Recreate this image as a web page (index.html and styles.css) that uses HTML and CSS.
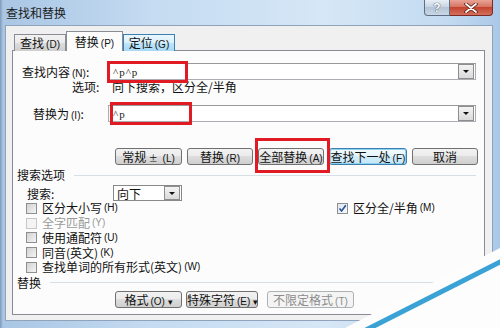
FILE: index.html
```html
<!DOCTYPE html>
<html lang="zh-CN">
<head>
  <meta charset="UTF-8" />
  <title>查找和替换</title>
  <link rel="stylesheet" href="styles.css">
</head>
<body>
  <div class="window">
    <div class="titlebar">
      <span class="title">查找和替换</span>
      <div class="controls">
        <div class="ctl help">?</div>
        <div class="ctl close">
          <svg width="14" height="10" viewBox="0 0 14 10">
            <path d="M2 1 L12 9 M12 1 L2 9" stroke="#5a1a14" stroke-width="3.4" stroke-linecap="round" />
            <path d="M2 1 L12 9 M12 1 L2 9" stroke="#fff" stroke-width="1.8" stroke-linecap="round" />
          </svg>
        </div>
      </div>
    </div>

    <div class="client">
      <div class="tabs">
        <div class="tab">查找<span class="key">(<u>D</u>)</span></div>
        <div class="tab active">替换<span class="key">(<u>P</u>)</span></div>
        <div class="tab hover">定位<span class="key">(<u>G</u>)</span></div>
      </div>

      <div class="panel">
        <!-- find / replace fields -->
        <div class="field-row">
          <span class="field-label">查找内容<span class="key">(<u>N</u>)</span>:</span>
          <div class="combo"><span class="combo-text">^p^p</span><span class="drop"></span></div>
        </div>
        <div class="options-row">
          <span class="opt-label">选项:</span>
          <span>向下搜索，区分全/半角</span>
        </div>
        <div class="field-row replace">
          <span class="field-label indent">替换为<span class="key">(<u>I</u>)</span>:</span>
          <div class="combo"><span class="combo-text">^p</span><span class="drop"></span></div>
        </div>

        <div class="btn-row">
          <div class="btn w-normal">常规 <span class="pm">±</span> <span class="key">(<u>L</u>)</span></div>
          <div class="btn w-repl">替换<span class="key">(<u>R</u>)</span></div>
          <div class="btn w-all">全部替换<span class="key">(<u>A</u>)</span></div>
          <div class="btn w-next focused">查找下一处<span class="key">(<u>F</u>)</span></div>
          <div class="btn w-cancel">取消</div>
        </div>

        <!-- search options -->
        <div class="section">
          <span>搜索选项</span>
          <span class="rule"></span>
        </div>
        <div class="search-row">
          <span class="search-label">搜索<u>:</u></span>
          <div class="select"><span>向下</span><span class="drop"></span></div>
        </div>

        <div class="checks">
          <div class="check-row">
            <div class="check left-col"><span class="box"></span>区分大小写<span class="key">(<u>H</u>)</span></div>
            <div class="check"><span class="box checked">
              <svg width="9" height="9" viewBox="0 0 9 9"><path d="M1.5 4.5 L3.6 7 L7.8 1.2" fill="none" stroke="#2a4f9c" stroke-width="1.6" /></svg>
            </span>区分全/半角<span class="key">(<u>M</u>)</span></div>
          </div>
          <div class="check-row disabled">
            <div class="check"><span class="box"></span>全字匹配<span class="key">(<u>Y</u>)</span></div>
          </div>
          <div class="check-row">
            <div class="check"><span class="box"></span>使用通配符<span class="key">(<u>U</u>)</span></div>
          </div>
          <div class="check-row">
            <div class="check"><span class="box"></span>同音(英文)<span class="key">(<u>K</u>)</span></div>
          </div>
          <div class="check-row">
            <div class="check"><span class="box"></span>查找单词的所有形式(英文)<span class="key">(<u>W</u>)</span></div>
          </div>
        </div>

        <div class="section second">
          <span>替换</span>
          <span class="rule"></span>
        </div>
        <div class="btn-row bottom">
          <div class="btn w-format">格式<span class="key">(<u>O</u>)</span> <span class="tri">▾</span></div>
          <div class="btn w-special">特殊字符<span class="key">(<u>E</u>)</span> <span class="tri">▾</span></div>
          <div class="btn w-nofmt disabled">不限定格式<span class="key">(<u>T</u>)</span></div>
        </div>
      </div>
    </div>

    <!-- red highlight boxes drawn over the dialog -->
    <div class="mark mark-find"></div>
    <div class="mark mark-repl"></div>
    <div class="mark mark-all"></div>

    <svg class="watermark" width="500" height="328" viewBox="0 0 500 328">
      <polygon points="345,328 500,248 500,328" fill="#fdfdfd" />
      <line x1="366" y1="330" x2="502" y2="261" stroke="#3aa2d4" stroke-width="5" />
    </svg>
  </div>
</body>
</html>
```

FILE: styles.css
```css
body {
  margin: 0;
  font-family: "Noto Sans CJK SC", "Noto Sans", sans-serif;
  font-size: 12px;
  color: #111;
}

.window {
  position: relative;
  width: 500px;
  height: 328px;
  overflow: hidden;
  display: flex;
  flex-direction: column;
  background: linear-gradient(to right, #7f9ab8 0, #a9c6e4 3px, #c4dbf1 30%, #d6e7f6 65%, #c2daf0 90%, #a9c8e7 100%);
}

/* title bar */
.titlebar {
  height: 25px;
  display: flex;
  justify-content: space-between;
  padding-left: 6px;
  padding-right: 7px;
}

.title {
  line-height: 25px;
  font-size: 12px;
  color: #1a1a1a;
}

.controls {
  display: flex;
  height: 16px;
}

.ctl {
  height: 15px;
  border: 1px solid #5e6f84;
  border-top: none;
  display: flex;
  align-items: center;
  justify-content: center;
}

.help {
  width: 24px;
  border-radius: 0 0 0 4px;
  background: linear-gradient(#e8eef6, #c6d3e2 50%, #b5c5d7 50%, #c9d7e6);
  color: #fff;
  font-family: "Liberation Sans", sans-serif;
  font-weight: bold;
  font-size: 12px;
  text-shadow: 0 0 1px #3d4c5e, 0 0 1px #3d4c5e;
}

.close {
  width: 42px;
  border-left: none;
  border-color: #7a2a22;
  border-radius: 0 0 4px 0;
  background: linear-gradient(#e8a394, #d4705f 50%, #c4432f 50%, #d3705c);
}

/* client area */
.client {
  flex: 1;
  margin: 0 7px 7px 5px;
  border: 1px solid #8fa4ba;
  background: #f0f0f0;
  padding: 5px 7px 5px 6px;
  display: flex;
  flex-direction: column;
}

.tabs {
  display: flex;
  align-items: flex-end;
  margin-left: 2px;
  margin-bottom: -1px;
  position: relative;
  z-index: 1;
}

.tab {
  width: 52px;
  height: 17px;
  box-sizing: border-box;
  border: 1px solid #898c95;
  border-bottom: none;
  background: linear-gradient(#f2f2f2, #ebebeb 50%, #dddddd 50%, #cfcfcf);
  text-align: center;
  line-height: 16px;
}

.tab.active {
  width: 57px;
  height: 20px;
  background: #fcfcfc;
  line-height: 20px;
}

.tab.hover {
  background: linear-gradient(#eaf6fd, #d9f0fc 50%, #bee6fd 50%, #a7d9f5);
  border-color: #3c7fb1;
}

.key {
  font-family: "Liberation Sans", sans-serif;
  font-size: 10px;
  margin-left: 2px;
}

.key u {
  text-decoration: none;
}

.panel {
  flex: 1;
  border: 1px solid #898c95;
  background: #fcfcfc;
  padding: 0 4px 0 4px;
}

/* find and replace fields */
.field-row {
  display: flex;
  align-items: center;
  margin-top: 12px;
  margin-left: 5px;
  height: 17px;
}

.field-row.replace {
  margin-top: 11px;
}

.field-label {
  width: 86px;
  flex-shrink: 0;
}

.field-label.indent {
  padding-left: 11px;
  width: 75px;
}

.combo {
  flex: 1;
  margin-right: 4px;
  height: 17px;
  box-sizing: border-box;
  border: 1px solid #abadb3;
  border-top-color: #999;
  background: #fff;
  display: flex;
  align-items: center;
  justify-content: space-between;
}

.combo-text {
  padding-left: 4px;
  font-family: "Liberation Serif", serif;
  font-size: 11px;
  color: #222;
  letter-spacing: 1px;
}

.drop {
  width: 14px;
  height: 13px;
  margin-right: 1px;
  border: 1px solid #8d8d8d;
  background: linear-gradient(#f3f3f3, #dadada);
  position: relative;
}

.drop::after {
  content: "";
  position: absolute;
  left: 4px;
  top: 5px;
  border-left: 3px solid transparent;
  border-right: 3px solid transparent;
  border-top: 3px solid #111;
}

.options-row {
  display: flex;
  line-height: 14px;
  height: 14px;
  margin-left: 55px;
}

.opt-label {
  width: 40px;
}

/* buttons */
.btn-row {
  display: flex;
  gap: 5px;
  margin-top: 26px;
  margin-left: 98px;
}

.btn {
  height: 17px;
  box-sizing: border-box;
  border: 1px solid #707070;
  border-radius: 3px;
  background: linear-gradient(#f2f2f2, #ebebeb 50%, #dddddd 50%, #cfcfcf);
  text-align: center;
  line-height: 15px;
  white-space: nowrap;
}

.btn.focused {
  border-color: #3c7fb1;
  background: linear-gradient(#f4fbfe, #e3f4fc 50%, #d2edfb 50%, #c4e6f8);
  box-shadow: inset 0 0 0 1px #8fd1f0;
}

.btn.disabled {
  border-color: #adb2b5;
  background: #f4f4f4;
  color: #8c8c8c;
}

.pm {
  font-size: 9px;
}

.tri {
  font-size: 9px;
}

.w-normal { width: 67px; }
.w-repl { width: 66px; }
.w-all { width: 66px; }
.w-next { width: 78px; }
.w-cancel { width: 66px; }

.btn-row.bottom {
  margin-top: 1px;
  gap: 4px;
}

.w-format { width: 67px; }
.w-special { width: 72px; }
.w-nofmt { width: 87px; margin-left: 5px; }

/* search options */
.section {
  display: flex;
  align-items: center;
  margin-top: 3px;
  line-height: 14px;
  height: 14px;
}

.section.second {
  margin-top: 1px;
}

.rule {
  flex: 1;
  margin-left: 9px;
  margin-right: 4px;
  border-top: 1px solid #d5dfe5;
}

.search-row {
  display: flex;
  align-items: center;
  margin-top: 3px;
  margin-left: 10px;
  height: 16px;
}

.search-label {
  width: 86px;
}

.search-label u {
  text-decoration: none;
}

.select {
  width: 69px;
  height: 16px;
  box-sizing: border-box;
  border: 1px solid #888;
  background: #fff;
  display: flex;
  align-items: center;
  justify-content: space-between;
  padding-left: 3px;
}

.select .drop {
  height: 12px;
}

.checks {
  margin-left: 9px;
}

.check-row {
  display: flex;
  height: 14.75px;
  line-height: 14px;
  align-items: center;
}

.check {
  display: flex;
  align-items: center;
  white-space: nowrap;
}

.left-col {
  width: 311px;
}

.box {
  width: 11px;
  height: 11px;
  box-sizing: border-box;
  margin-right: 5px;
  border: 1px solid #8f8f8f;
  background: linear-gradient(135deg, #d2d2d2, #f4f4f4);
  display: flex;
  align-items: center;
  justify-content: center;
}

.box.checked {
  background: linear-gradient(135deg, #dfe6ef, #f7f9fb);
}

.check-row.disabled {
  color: #9a9a9a;
}

.check-row.disabled .box {
  border-color: #c8c8c8;
  background: #f4f4f4;
}

/* red highlight frames */
.mark {
  position: absolute;
  border: 3px solid #e01b24;
}

.mark-find {
  left: 107px;
  top: 61px;
  width: 75px;
  height: 16px;
}

.mark-repl {
  left: 110px;
  top: 102px;
  width: 76px;
  height: 17px;
}

.mark-all {
  left: 255px;
  top: 138px;
  width: 69px;
  height: 29px;
}

.watermark {
  position: absolute;
  left: 0;
  top: 0;
}
```
